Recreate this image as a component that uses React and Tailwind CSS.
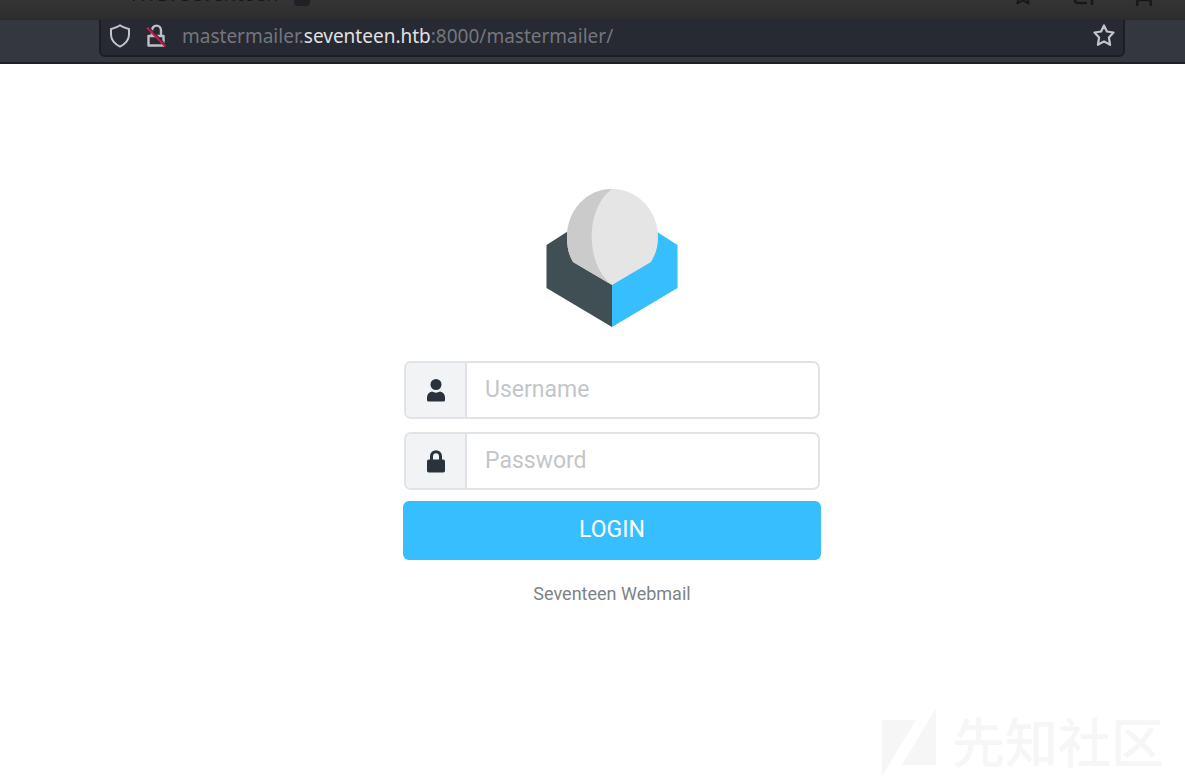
import { useState } from "react";

function Shield() {
  return (
    <svg viewBox="0 0 20 24" className="h-6 w-5" fill="none" stroke="#c4c5ca" strokeWidth="2" strokeLinejoin="round">
      <path d="M10 1.3 C7.5 3.2 4 4.2 1 5 V11 C1.3 16 4.8 20 10 22.6 C15.2 20 18.7 16 19 11 V5 C16 4.2 12.5 3.2 10 1.3Z" />
    </svg>
  );
}

function InsecureLock() {
  return (
    <svg viewBox="0 0 20 24" className="h-6 w-5" fill="none">
      <path d="M6 11 V6.5 C6 0 15 0 15 6.5 V11 M2.5 12 H17.5 V21.5 H2.5Z" stroke="#bfc0c5" strokeWidth="2.4" strokeLinejoin="round" />
      <path d="M2.2 2.8 L19.5 20.8" stroke="#272933" strokeWidth="1.6" />
      <path d="M1 3.5 L19.5 22.5" stroke="#b51f48" strokeWidth="2.2" />
    </svg>
  );
}

function StarShape({ className }) {
  return (
    <svg viewBox="0 0 22 23" className={className} fill="none" stroke="currentColor" strokeWidth="2.2" strokeLinejoin="round">
      <path d="M11 1.5 L13.9 7.5 L20.5 8.5 L15.9 13.6 L17.1 20.8 L11 17.4 L4.9 20.8 L6.1 13.6 L1.5 8.5 L8.1 7.5Z" />
    </svg>
  );
}

function Logo() {
  return (
    <svg viewBox="0 0 132 140" className="h-[140px] w-[132px]" role="img" aria-label="Webmail logo">
      <path d="M0.5 57 L66 15 V139 L0.5 100Z" fill="#404f54" />
      <path d="M131.5 57 L66 15 V139 L131.5 100Z" fill="#37beff" />
      <path d="M66 1 C40 1 21 23 21 49 C21 60 23 67 27 74 L66 97 L105 74 C109 67 112 60 112 49 C112 23 92 1 66 1Z" fill="#e5e5e5" />
      <path d="M66 1 C40 1 21 23 21 49 C21 60 23 67 27 74 L66 97 C39 77 39 20 66 1Z" fill="#cbcbcb" />
    </svg>
  );
}

function UserIcon() {
  return (
    <svg viewBox="0 0 18 23" className="h-[23px] w-[18px]" fill="#2a323b">
      <circle cx="9" cy="5.5" r="5.5" />
      <path d="M0 21 V18.5 C0 15 2 13 5 12.5 C7.5 14 10.5 14 13 12.5 C16 13 18 15 18 18.5 V21 Q18 22.5 16.5 22.5 H1.5 Q0 22.5 0 21Z" />
    </svg>
  );
}

function LockIcon() {
  return (
    <svg viewBox="0 0 18 23" className="h-[23px] w-[18px]">
      <path d="M4.5 11 V6.5 C4.5 0 13.5 0 13.5 6.5 V11" fill="none" stroke="#2a323b" strokeWidth="3" />
      <rect x="0" y="9.5" width="18" height="13" rx="1.8" fill="#2a323b" />
    </svg>
  );
}

function Field({ id, type, label, icon, value, onChange }) {
  return (
    <div className="flex h-[58px] overflow-hidden rounded-[7px] border-2 border-[#e0e4e8] bg-white">
      <label htmlFor={id} aria-label={label} className="flex w-[61px] shrink-0 items-center justify-center border-r-2 border-[#dfe2e7] bg-[#f1f3f5]">
        {icon}
      </label>
      <input
        id={id}
        type={type}
        placeholder={label}
        value={value}
        onChange={onChange}
        className="min-w-0 flex-1 px-[18px] pt-px text-[23px] text-[#2c363a] outline-none placeholder:text-[#c3c6c8]"
      />
    </div>
  );
}

function BrowserBar() {
  return (
    <header className="font-['Noto_Sans',sans-serif]">
      <div className="flex h-5 items-start justify-between overflow-hidden border-b border-[#292929] bg-linear-to-b from-[#343434] to-[#2d2d2d] pr-8 pl-[131px] text-[#18181b]">
        <span className="-mt-5 flex items-center gap-4 text-xl">
          HTB: Seventeen
          <span className="h-6 w-4 rounded-sm bg-[#202126]" />
        </span>
        <span className="-mt-4 flex items-start gap-10">
          <StarShape className="h-[22px] w-5" />
          <svg viewBox="0 0 22 22" className="h-[22px] w-[22px]" fill="none" stroke="currentColor" strokeWidth="2.5">
            <path d="M2 2 V16 Q2 19 5 19 H14 M19 21 V7" />
          </svg>
          <svg viewBox="0 0 18 22" className="h-[22px] w-[18px]" fill="none" stroke="currentColor" strokeWidth="2.5">
            <path d="M4 2 L2 22 M14 2 L16 22 M2 16 H16" />
          </svg>
        </span>
      </div>
      <div className="border-b-2 border-[#1f2025] bg-[#35373f] pr-[60px] pb-[5px] pl-[99px]">
        <div className="flex h-[37px] items-center gap-4 rounded-b-md border-2 border-t-0 border-[#1d1e25] bg-[#272933] pr-2 pb-1 pl-[9px]">
          <Shield />
          <InsecureLock />
          <span className="min-w-0 flex-1 text-[19px] leading-7 whitespace-nowrap text-[#75767c]">
            mastermailer.<span className="text-[#e0e0e3]">seventeen.htb</span>:8000/mastermailer/
          </span>
          <button type="button" aria-label="Bookmark this page" className="text-[#c4c5ca]">
            <StarShape className="h-[23px] w-[22px]" />
          </button>
        </div>
      </div>
    </header>
  );
}

function Watermark() {
  return (
    <div className="flex items-start gap-4 text-[#f6f6f6]">
      <svg viewBox="0 0 54 70" className="h-[70px] w-[54px]" fill="currentColor">
        <path d="M0 12 H34 L0 68Z M54 0 V57 H20Z" />
      </svg>
      <span className="font-['Noto_Sans_CJK_SC',sans-serif] text-[53px] leading-[64px] font-medium">先知社区</span>
    </div>
  );
}

export default function App() {
  const [username, setUsername] = useState("");
  const [password, setPassword] = useState("");
  return (
    <div className="flex min-h-screen flex-col bg-white">
      <BrowserBar />
      <main className="flex flex-1 flex-col items-center pt-[124px] pl-[39px] font-[Roboto,sans-serif]">
        <Logo />
        <form className="mt-[33px] flex w-full max-w-[418px] flex-col" onSubmit={(e) => e.preventDefault()}>
          <div className="flex flex-col gap-[13px] px-px">
            <Field id="username" type="text" label="Username" icon={<UserIcon />} value={username} onChange={(e) => setUsername(e.target.value)} />
            <Field id="password" type="password" label="Password" icon={<LockIcon />} value={password} onChange={(e) => setPassword(e.target.value)} />
          </div>
          <button type="submit" className="mt-[11px] h-[59px] rounded-md bg-[#37beff] text-[23px] text-white">
            LOGIN
          </button>
        </form>
        <p className="mt-5 text-lg leading-7 text-[#7e8386]">Seventeen Webmail</p>
      </main>
      <footer className="flex justify-end pr-[21px] pb-[3px]">
        <Watermark />
      </footer>
    </div>
  );
}
